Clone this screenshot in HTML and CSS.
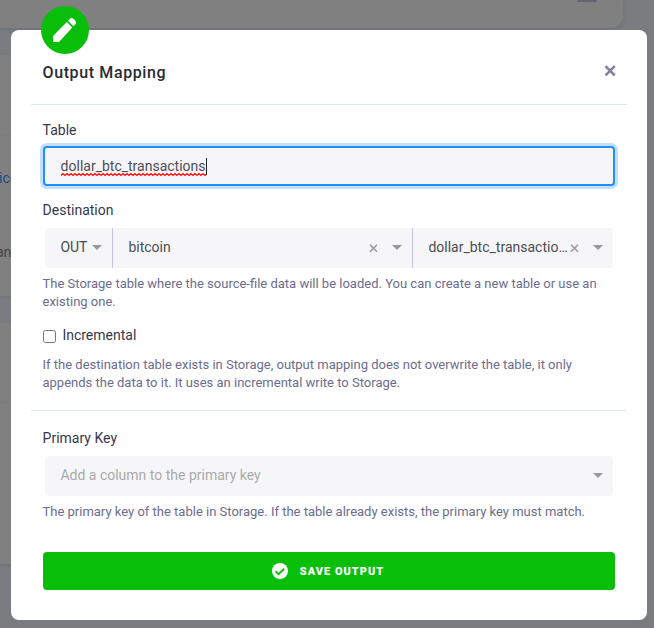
FILE: index.html
```html
<!DOCTYPE html>
<html lang="en">
<head>
<meta charset="utf-8">
<title>Output Mapping</title>
<link rel="stylesheet" href="styles.css">
</head>
<body>
<div class="page">
  <div class="panel panel-top"><span class="panel-action"></span></div>
  <div class="panel panel-a"></div>
  <div class="panel panel-b"><span class="peek peek-link">ice</span><span class="peek">ans</span></div>
  <div class="panel panel-c"></div>
  <div class="panel panel-d"></div>
</div>
<div class="modal" role="dialog" aria-labelledby="title">
  <span class="badge"><svg width="48" height="48" viewBox="0 0 48 48"><path fill="#fff" d="M12.1 35.9v-6L25.8 16l5.5 5.5L18 35.9zM27 14.8l1.9-2c1.1-1 2.5-1 3.6 0l1.7 1.7c1.1 1.1 1.3 2.6.2 3.7l-2 2.1z"/></svg></span>
  <header class="header">
    <h1 class="title" id="title">Output Mapping</h1>
    <button class="close" aria-label="Close"><svg width="12" height="12" viewBox="0 0 12 12"><path d="M1.5 1.2l9.2 9.2M10.7 1.2l-9.2 9.2" stroke="#7f819e" stroke-width="2.6"/></svg></button>
  </header>
  <section class="section section-table">
    <div class="label">Table</div>
    <div class="input"><span class="misspelled">dollar_btc_transactions<svg class="squiggle" width="145" height="3"><defs><pattern id="wave" width="4" height="3" patternUnits="userSpaceOnUse"><path d="M-1 1.5L0 2.3L2 .7L4 2.3L5 1.5" fill="none" stroke="#f00" stroke-width="1.3"/></pattern></defs><rect width="145" height="3" fill="url(#wave)"/></svg></span><span class="caret"></span></div>
    <div class="label label-destination">Destination</div>
    <div class="select-group">
      <div class="select select-stage"><span class="value">OUT</span><i class="arrow"></i></div>
      <div class="select select-bucket"><span class="value">bitcoin</span><svg class="clear" width="9" height="9" viewBox="0 0 9 9"><path d="M1 .7l7 7M8 .7l-7 7"/></svg><i class="arrow"></i></div>
      <div class="select select-name"><span class="value">dollar_btc_transactio…</span><svg class="clear" width="9" height="9" viewBox="0 0 9 9"><path d="M1 .7l7 7M8 .7l-7 7"/></svg><i class="arrow"></i></div>
    </div>
    <p class="help">The Storage table where the source-file data will be loaded. You can create a new table or use an existing one.</p>
    <label class="check"><input class="checkbox" type="checkbox"><span>Incremental</span></label>
    <p class="help help-incremental">If the destination table exists in Storage, output mapping does not overwrite the table, it only appends the data to it. It uses an incremental write to Storage.</p>
  </section>
  <section class="section section-key">
    <div class="label">Primary Key</div>
    <div class="select-group">
      <div class="select select-key"><span class="value">Add a column to the primary key</span><i class="arrow"></i></div>
    </div>
    <p class="help">The primary key of the table in Storage. If the table already exists, the primary key must match.</p>
    <button class="save"><svg width="16" height="16" viewBox="0 0 16 16"><circle cx="8" cy="8" r="8" fill="#fff"/><path d="M3.6 8.2l3 2.9 5.6-5.4" fill="none" stroke="#09be09" stroke-width="1.9"/></svg><span class="save-text">SAVE OUTPUT</span></button>
  </section>
</div>
</body>
</html>
```
FILE: styles.css
```css
* { box-sizing: border-box; }
body {
  margin: 0;
  width: 654px;
  height: 628px;
  overflow: hidden;
  position: relative;
  background: #7a7c80;
  color: #36384a;
  font: 14px/20px Roboto, "Liberation Sans", sans-serif;
}
.page { height: 628px; }
.panel {
  width: 623px;
  background: #808080;
  box-shadow: 0 1px 4px rgba(60, 65, 75, .2);
}
.panel-top { height: 28px; border-radius: 0 0 12px 0; }
.panel-action {
  display: block;
  width: 20px;
  height: 2px;
  margin-left: 577px;
  border-radius: 0 0 2px 2px;
  background: #636471;
}
.panel-a { height: 81px; margin-top: 27px; }
.panel-b { height: 160px; padding-top: 32px; }
.panel-c { height: 80px; margin-top: 27px; }
.panel-d { height: 161px; }
.peek { display: block; margin: 54px 0 0 -4px; color: #42434f; }
.peek-link { margin: 0 0 0 -1px; color: #164c85; }
.modal {
  position: absolute;
  left: 11px;
  top: 30px;
  width: 636px;
  height: 590px;
  border-radius: 8px;
  background: #fff;
}
.badge {
  position: absolute;
  left: 30px;
  top: -24px;
  width: 48px;
  height: 48px;
  border-radius: 50%;
  background: #09be09;
}
.badge svg { display: block; }
.header {
  display: flex;
  align-items: flex-start;
  justify-content: space-between;
  height: 75px;
  margin: 0 20px;
  padding: 32px 11px 0 11.5px;
  border-bottom: 1px solid #dfe4f2;
}
.title {
  margin: 1px 0 0;
  color: #2a2b31;
  font-size: 16px;
  font-weight: 500;
  line-height: 20px;
  letter-spacing: .62px;
}
.close {
  margin: 3px 0 0;
  padding: 0;
  border: 0;
  background: none;
  line-height: 0;
}
.section { margin: 0 20px; padding: 0 12px; }
.section-table {
  height: 306px;
  padding-top: 15px;
  border-bottom: 1px solid #dfe4f2;
}
.section-key { padding-top: 17px; }
.label { height: 20px; text-indent: -.4px; }
.input {
  display: flex;
  align-items: center;
  height: 40px;
  margin-top: 6px;
  padding: 0 15.6px;
  border: 2px solid #1f8fff;
  border-radius: 4px;
  background: #f6f6f9;
  box-shadow: 0 0 0 3px #c4dfff;
  color: #4c4d57;
}
.misspelled { position: relative; }
.squiggle { position: absolute; left: 0; top: 17px; }
.caret { width: 1px; height: 17px; margin-left: .6px; background: #222; }
.label-destination { margin-top: 14px; }
.select-group {
  display: flex;
  height: 40px;
  margin: 8px 2px 0;
  overflow: hidden;
  border-radius: 4px;
  background: #f6f6f9;
}
.select {
  display: flex;
  align-items: center;
  padding: 0 10px 2px 15.4px;
  color: #4c4c50;
}
.value { flex: 1; white-space: nowrap; }
.select + .select { border-left: 1px solid #c5c5dc; }
.select-stage { width: 67px; }
.select-bucket { width: 300px; }
.select-name { width: 201px; }
.select-key { width: 568px; color: #aaa; }
.arrow {
  margin-top: 1px;
  border: 5px solid transparent;
  border-top-color: #999;
  border-bottom: 0;
}
.clear {
  margin: 2px 14px 0 0;
  fill: none;
  stroke: #999;
  stroke-width: 1.6;
}
.help {
  margin: 7px 0 0 -.5px;
  color: #6b6d8f;
  font-size: 13px;
  line-height: 18px;
}
.check {
  display: flex;
  align-items: center;
  gap: 6.4px;
  height: 20px;
  margin-top: 14px;
}
.checkbox { width: 13px; height: 13px; margin: 3px 0 0; }
.help-incremental { margin-top: 11px; }
.save {
  display: flex;
  align-items: center;
  justify-content: center;
  gap: 12px;
  width: 572px;
  height: 38px;
  margin: 31px 0 0;
  padding: 0 2px 0 0;
  border: 0;
  border-radius: 4px;
  background: #09be09;
  color: #fff;
  font: 900 11px/16px Roboto, "Liberation Sans", sans-serif;
  letter-spacing: 1px;
}
.save-text { padding-top: 1px; }
```
